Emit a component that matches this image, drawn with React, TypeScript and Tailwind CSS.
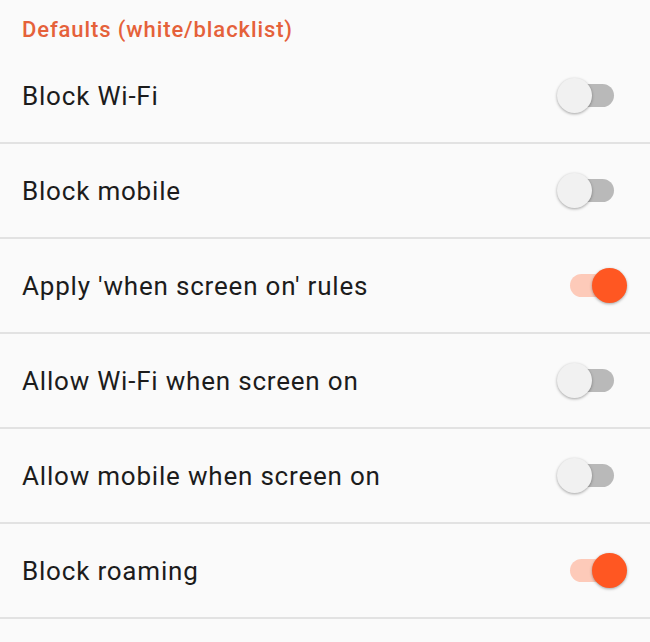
import React from "react";

const rows: { label: string; on: boolean }[] = [
  { label: "Block Wi-Fi", on: false },
  { label: "Block mobile", on: false },
  { label: "Apply 'when screen on' rules", on: true },
  { label: "Allow Wi-Fi when screen on", on: false },
  { label: "Allow mobile when screen on", on: false },
  { label: "Block roaming", on: true },
];

function Toggle({ on }: { on: boolean }) {
  return (
    <div className="relative w-[72px] h-[37px] shrink-0">
      <div
        className={
          "absolute left-[13px] top-[7px] w-[44px] h-[23px] rounded-full " +
          (on ? "bg-[#fdcab9]" : "bg-[#b9b9b9]")
        }
      />
      <div
        className={
          "absolute top-[1px] w-[35px] h-[35px] rounded-full shadow-[0_1px_3px_rgba(0,0,0,0.35)] " +
          (on ? "left-[35px] bg-[#ff5722]" : "left-0 bg-[#f1f1f1]")
        }
      />
    </div>
  );
}

export default function App() {
  return (
    <div
      className="w-[650px] h-[642px] bg-[#fafafa] overflow-hidden"
      style={{ fontFamily: "Roboto, 'Noto Sans', sans-serif" }}
    >
      <div className="h-[49px] pt-[17px] pl-[22px]">
        <div className="text-[22px] leading-[26px] font-medium tracking-[0.9px] text-[#e5613a]">
          Defaults (white/blacklist)
        </div>
      </div>
      {rows.map((r) => (
        <div key={r.label} className="h-[95px] border-b-2 border-[#e2e2e2] flex items-center justify-between pl-[22px] pr-[21px]">
          <span className="text-[26px] leading-[32px] tracking-[0.8px] text-[#1c1c1c]">{r.label}</span>
          <Toggle on={r.on} />
        </div>
      ))}
    </div>
  );
}
